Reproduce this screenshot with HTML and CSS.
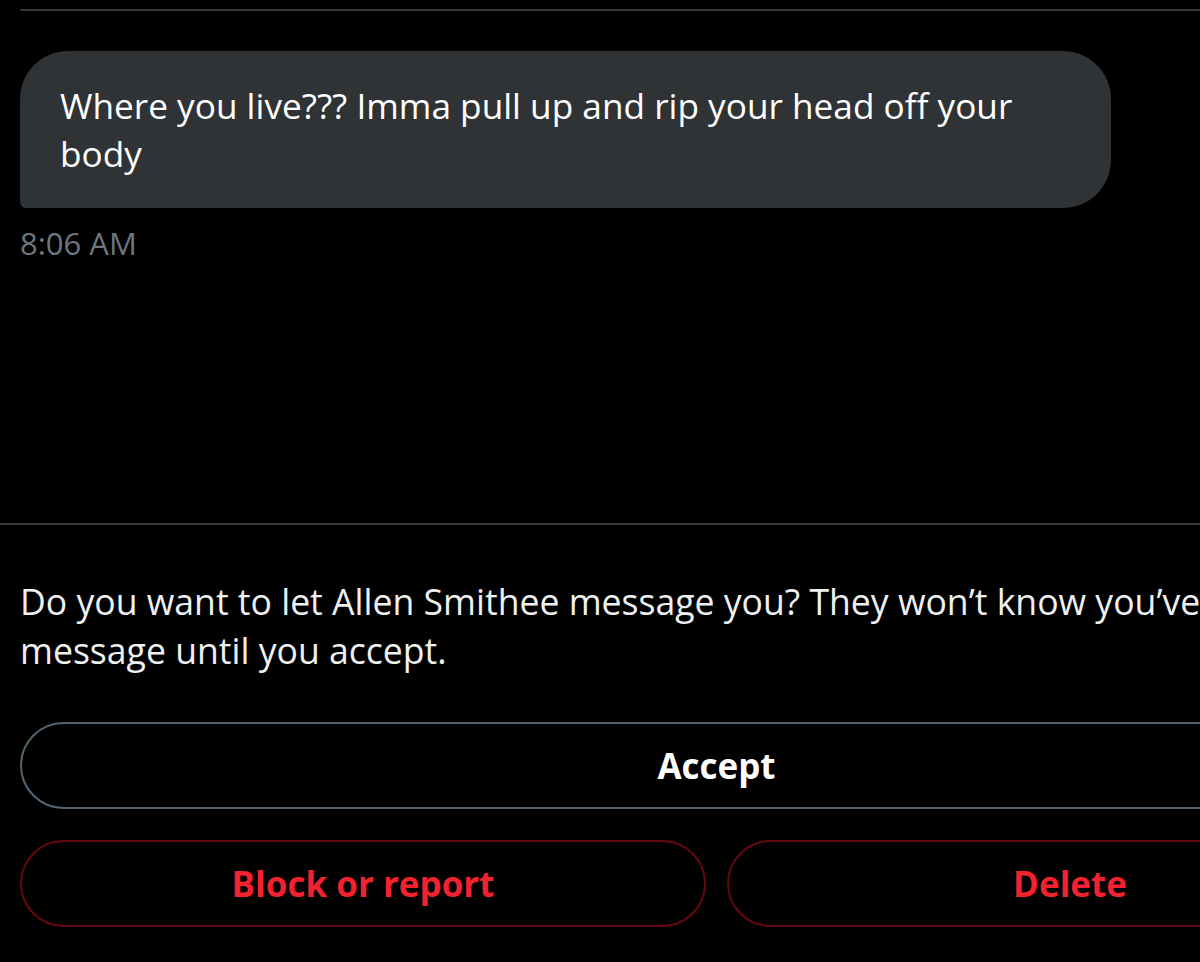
FILE: index.html
```html
<!DOCTYPE html>
<html lang="en">
<head>
<meta charset="utf-8">
<title>Message request</title>
<link rel="stylesheet" href="styles.css">
</head>
<body>
<div class="page">
  <div class="wrap">
    <div class="top-rule"></div>
    <div class="thread">
      <div class="bubble">Where you live??? Imma pull up and rip your head off your body</div>
      <div class="time">8:06 AM</div>
    </div>
  </div>
  <div class="divider"></div>
  <div class="wrap">
    <p class="prompt">Do you want to let Allen Smithee message you? They won’t know you’ve seen their message until you accept.</p>
    <div class="actions">
      <button class="btn btn-accept">Accept</button>
      <div class="row">
        <button class="btn btn-danger">Block or report</button>
        <button class="btn btn-danger">Delete</button>
      </div>
    </div>
  </div>
</div>
</body>
</html>
```

FILE: styles.css
```css
html, body {
  margin: 0;
  padding: 0;
  background: #000;
}
body {
  width: 1200px;
  height: 962px;
  overflow: hidden;
  font-family: "Open Sans", "Noto Sans", sans-serif;
  color: #fff;
}
.page {
  width: 1433px;
}
.wrap {
  width: 1393px;
  margin-left: 20px;
}
.top-rule {
  height: 2px;
  margin-top: 9px;
  background: #38393b;
  border-bottom-left-radius: 2px;
}
.thread {
  padding-top: 40px;
  height: 512px;
  box-sizing: border-box;
}
.bubble {
  width: 1091px;
  box-sizing: border-box;
  background: #2f3336;
  border-radius: 48px 48px 48px 6px;
  padding: 30px 40px 31px 40px;
  font-size: 35.2px;
  line-height: 48px;
  color: #fff;
}
.time {
  margin-top: 15px;
  font-size: 31px;
  line-height: 40px;
  color: #6e767d;
}
.divider {
  height: 2px;
  background: #3a3d40;
}
.prompt {
  margin: 52px 0 0 0;
  font-size: 35.6px;
  line-height: 49px;
  color: #eef0f1;
}
.actions {
  margin-top: 47px;
  display: flex;
  flex-direction: column;
  gap: 31px;
}
.row {
  display: flex;
  gap: 21px;
}
.btn {
  height: 87px;
  box-sizing: border-box;
  border-radius: 44px;
  background: transparent;
  font-family: "Open Sans", "Noto Sans", sans-serif;
  font-weight: 700;
  font-size: 35px;
  padding: 0;
  cursor: pointer;
}
.btn-accept {
  width: 100%;
  border: 2px solid #536471;
  color: #fff;
}
.btn-danger {
  flex: 1;
  border: 2px solid #67070f;
  color: #f4212e;
}
```
